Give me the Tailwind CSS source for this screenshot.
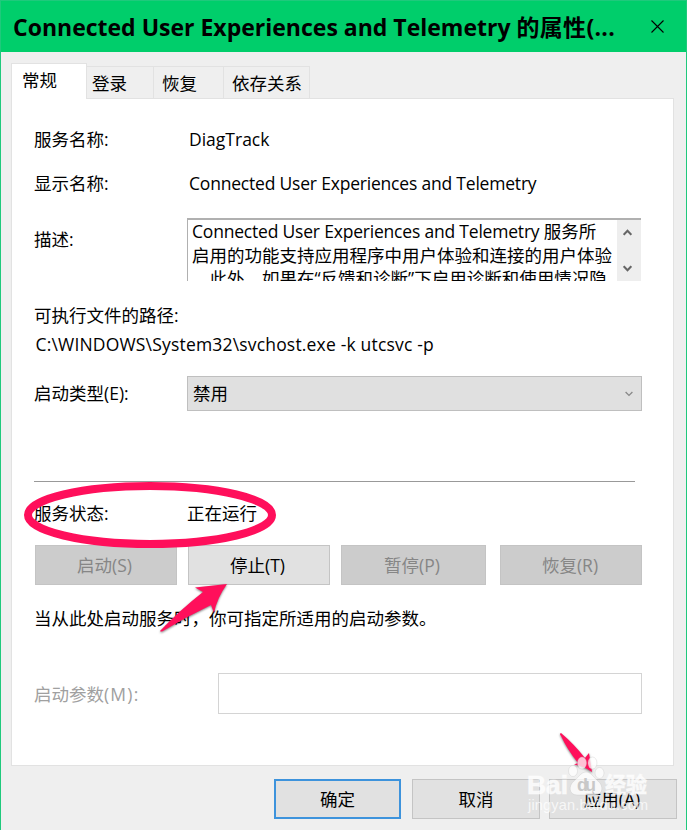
<!DOCTYPE html>
<html lang="zh-CN">
<head>
    <meta charset="UTF-8">
    <meta name="viewport" content="width=device-width, initial-scale=1.0">
    <title>Connected User Experiences and Telemetry 的属性</title>
    <script src="https://cdn.jsdelivr.net/npm/@tailwindcss/browser@4"></script>
</head>
<body class="bg-[#efefef] overflow-hidden">
    <div class="relative flex h-[830px] w-[687px] flex-col overflow-hidden border-x border-[#1fc97c] bg-[#efefef] font-['Open_Sans','Noto_Sans_CJK_SC',sans-serif] text-[17.5px] leading-[22px] text-black whitespace-nowrap">
        <header class="flex h-[52px] shrink-0 items-center justify-between border-t border-[#1fc97c] bg-[#00ce6b] pl-3 pr-[22px]">
            <h1 class="text-[23px] font-bold">Connected User Experiences and Telemetry <span class="tracking-[0.3px]">的属性(...</span></h1>
            <svg class="size-[13px]" viewBox="0 0 13 13" fill="none" stroke="#000" stroke-width="1.1"><path d="M.5.5l12 12M12.5.5l-12 12"/></svg>
        </header>

        <main class="flex flex-col px-2.5 pt-[11px]">
            <nav class="z-10 flex h-[35px] items-end">
                <div class="-mb-px h-[36px] w-[76px] border border-b-0 border-[#e2e2e2] bg-white pl-[10px] pt-[5px]">常规</div>
                <div class="h-[32px] w-[67px] border-t border-r border-[#e2e2e2] pl-[5px] pt-[5px]">登录</div>
                <div class="h-[32px] w-[70px] border-t border-r border-[#e2e2e2] pl-[8px] pt-[5px]">恢复</div>
                <div class="h-[32px] w-[86px] border-t border-r border-[#e2e2e2] pl-[8px] pt-[5px]">依存关系</div>
            </nav>
            <section class="flex h-[668px] w-[663px] flex-col border border-[#e2e2e2] bg-white pl-[22px] pt-[29px]">
                <div class="flex h-[22px]">
                    <div class="w-[155px]">服务名称:</div>
                    <div>DiagTrack</div>
                </div>
                <div class="mt-[22px] flex h-[22px]">
                    <div class="w-[155px]">显示名称:</div>
                    <div class="tracking-[-0.2px]">Connected User Experiences and Telemetry</div>
                </div>
                <div class="mt-[24px] flex h-[63px]">
                    <div class="w-[153px] pt-[10px]">描述:</div>
                    <div class="flex w-[454px] justify-between overflow-hidden border-t-2 border-l border-[#b0b0b0]">
                        <div class="pl-[4px] leading-[23.5px]">
                            <div><span class="tracking-[-0.2px]">Connected User Experiences and Telemetry </span>服务所</div>
                            <div>启用的功能支持应用程序中用户体验和连接的用户体验</div>
                            <div>。此外，如果在“反馈和诊断”下启用诊断和使用情况隐</div>
                        </div>
                        <div class="flex w-[24px] flex-col items-center justify-between bg-[#eee] pr-[3px] pt-[9px] pb-[9px]">
                            <svg class="h-[7px] w-[9px]" viewBox="0 0 9 7" fill="none" stroke="#666" stroke-width="2"><path d="M.7 5.8l3.8-4 3.8 4"/></svg>
                            <svg class="h-[7px] w-[9px]" viewBox="0 0 9 7" fill="none" stroke="#666" stroke-width="2"><path d="M.7 1.2l3.8 4 3.8-4"/></svg>
                        </div>
                    </div>
                </div>
                <div class="mt-[23px] h-[22px]">可执行文件的路径:</div>
                <div class="mt-[7px] h-[22px] pl-[1.5px] tracking-[0.18px]">C:\WINDOWS\System32\svchost.exe -k utcsvc -p</div>
                <div class="mt-[21px] flex h-[35px] items-center">
                    <div class="w-[153px] pb-0.5">启动类型(E):</div>
                    <div class="flex h-full w-[455px] items-center justify-between border border-[#bfbfbf] bg-[#e0e0e0] pl-[5px] pr-[8px]">
                        <span class="pb-0.5">禁用</span>
                        <svg class="h-[6px] w-[8px]" viewBox="0 0 8 6" fill="none" stroke="#888" stroke-width="1.3"><path d="M.6 1l3.4 3.4L7.4 1"/></svg>
                    </div>
                </div>
                <div class="mt-[70px] h-px w-[601px] bg-[#999]"></div>
                <div class="mt-[20px] flex h-[22px]">
                    <div class="w-[153px]">服务状态:</div>
                    <div>正在运行</div>
                </div>
                <div class="mt-[21px] flex h-[40px] pl-px text-[#868686]">
                    <button class="w-[142px] border border-[#c4c4c4] bg-[#ccc] pr-[3px]">启动(S)</button>
                    <button class="ml-[11px] w-[142px] border border-[#c4c4c4] bg-[#e1e1e1] pr-[3px] text-black">停止(T)</button>
                    <button class="ml-[11px] w-[145px] border border-[#c4c4c4] bg-[#ccc] pr-[3px]">暂停(P)</button>
                    <button class="ml-[14px] w-[142px] border border-[#c4c4c4] bg-[#ccc] pr-[2px]">恢复(R)</button>
                </div>
                <div class="mt-[22px] h-[22px]">当从此处启动服务时，你可指定所适用的启动参数。</div>
                <div class="mt-[44px] flex h-[41px] items-center">
                    <div class="w-[184px] text-[#a0a0a0]">启动参数<span class="tracking-[1.2px]">(M):</span></div>
                    <div class="h-full w-[424px] border border-[#d4d4d4] bg-white"></div>
                </div>
            </section>
        </main>

        <footer class="mt-[13px] flex h-[40px] shrink-0 pl-[273px]">
            <button class="w-[127px] border-2 border-[#3d93dc] bg-[#e1e1e1]">确定</button>
            <button class="ml-[11px] w-[128px] border border-[#c4c4c4] bg-[#e1e1e1]">取消</button>
            <button class="ml-[9px] w-[128px] border border-[#c4c4c4] bg-[#e1e1e1] pr-[2px]">应用(A)</button>
        </footer>

        <!-- marks drawn over the dialog -->
        <svg class="absolute top-0 -left-px h-[830px] w-[687px]" viewBox="0 0 687 830">
            <ellipse cx="150" cy="515" rx="122" ry="29" fill="none" stroke="#ff0f5b" stroke-width="8"/>
            <g fill="#ff0f5b" class="drop-shadow-[0_1px_1px_rgba(0,0,0,0.5)]">
                <path d="M227 584L195 587.500L203 592Q180 610 160 631Q161 632 163 631Q186 617 211 605L214 613Q217 598 227 584Z"/>
                <path d="M592 772L589 753L585 758Q574 744 561 733Q559 734 561 736Q567 749 578 763L574 764.500Q584 766 592 772Z"/>
            </g>
            <g fill="#fff" fill-opacity="0.75" stroke="#c0c0c0" stroke-opacity="0.4" stroke-width="0.8">
                <ellipse cx="573" cy="771" rx="4.500" ry="5.500"/>
                <ellipse cx="582" cy="763" rx="4.500" ry="6"/>
                <ellipse cx="592.500" cy="763" rx="4.500" ry="6"/>
                <ellipse cx="599.500" cy="773" rx="4.500" ry="5.500"/>
                <path d="M586 772C581 772 578 778 574 781C568 786 569 795 577 795H595C603 795 604 786 598 781C594 778 591 772 586 772Z"/>
            </g>
            <g class="font-['Liberation_Sans','Noto_Sans_CJK_SC',sans-serif]">
                <g fill="#fff" fill-opacity="0.8" stroke="#fff" stroke-opacity="0.45" stroke-width="1.2" class="font-bold">
                    <text x="527" y="794" font-size="26" textLength="41" lengthAdjust="spacingAndGlyphs">Bai</text>
                    <text x="605" y="792" font-size="21" textLength="42">经验</text>
                </g>
                <text x="577" y="791" font-size="18" textLength="19" fill="#c8c8c8" class="font-bold">du</text>
                <text x="528" y="810" font-size="14.500" textLength="120" fill="#fff" fill-opacity="0.75">jingyan.baidu.com</text>
            </g>
        </svg>
    </div>
</body>
</html>
